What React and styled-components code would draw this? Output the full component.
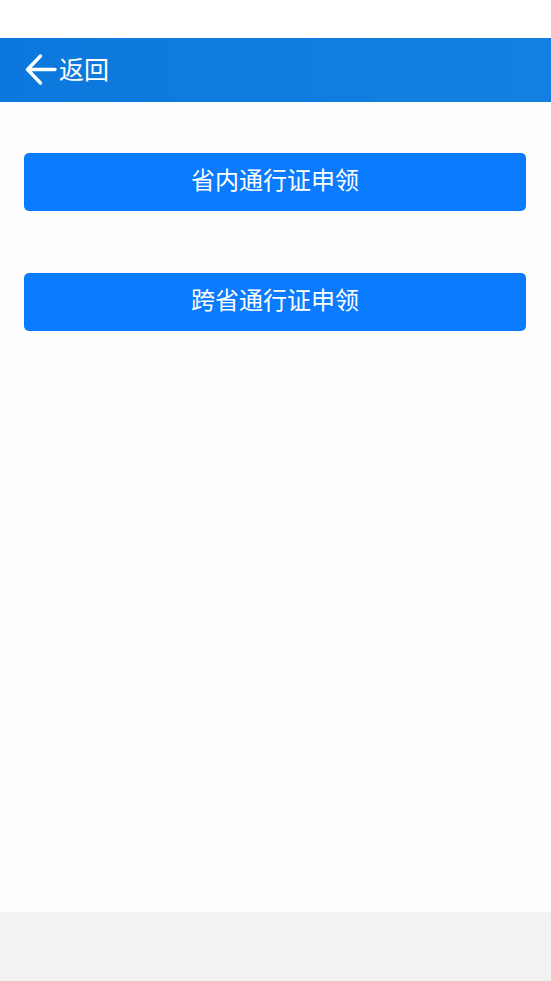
import styled, { createGlobalStyle } from 'styled-components';

const GlobalStyle = createGlobalStyle`
  html, body {
    margin: 0;
    padding: 0;
    height: 100%;
  }
  body {
    font-family: "Noto Sans CJK SC", "Noto Sans", sans-serif;
    background: #fefefe;
  }
  #root {
    height: 100%;
  }
`;

const Page = styled.div`
  display: flex;
  flex-direction: column;
  height: 981px;
`;

const StatusGap = styled.div`
  height: 38px;
  background: #ffffff;
`;

const Header = styled.header`
  display: flex;
  align-items: center;
  height: 64px;
  padding-left: 24px;
  background: linear-gradient(90deg, #0c78dd, #1380e1);
  color: #ffffff;
  box-sizing: border-box;
`;

const BackButton = styled.button`
  display: flex;
  align-items: center;
  gap: 2px;
  padding: 0;
  border: none;
  background: none;
  color: #ffffff;
  font-family: inherit;
  font-size: 25px;
  cursor: pointer;

  svg {
    display: block;
  }

  span {
    line-height: 1;
    padding-bottom: 3px;
  }
`;

const Main = styled.main`
  flex: 1;
  display: flex;
  flex-direction: column;
  gap: 62px;
  padding: 51px 25px 0 24px;
  background: #fefefe;
`;

const ActionButton = styled.button`
  height: 58px;
  padding: 0 0 6px;
  border: none;
  border-radius: 5px;
  background: #0a7bff;
  color: #ffffff;
  font-family: inherit;
  font-size: 24px;
  line-height: 1;
  cursor: pointer;
`;

const Footer = styled.footer`
  height: 68px;
  background: #f2f2f2;
  border-top: 1px solid #f6f6f6;
`;

function BackArrow() {
  return (
    <svg width="33" height="34" viewBox="0 0 33 34" fill="none">
      <path
        d="M31 16.5H3.5M16.5 3L3.5 16.5L16.5 30"
        stroke="#ffffff"
        strokeWidth="3.4"
        strokeLinecap="round"
        strokeLinejoin="round"
      />
    </svg>
  );
}

export default function App() {
  return (
    <Page>
      <GlobalStyle />
      <StatusGap />
      <Header>
        <BackButton type="button">
          <BackArrow />
          <span>返回</span>
        </BackButton>
      </Header>
      <Main>
        {['省内通行证申领', '跨省通行证申领'].map((label) => (
          <ActionButton key={label} type="button">
            {label}
          </ActionButton>
        ))}
      </Main>
      <Footer />
    </Page>
  );
}
